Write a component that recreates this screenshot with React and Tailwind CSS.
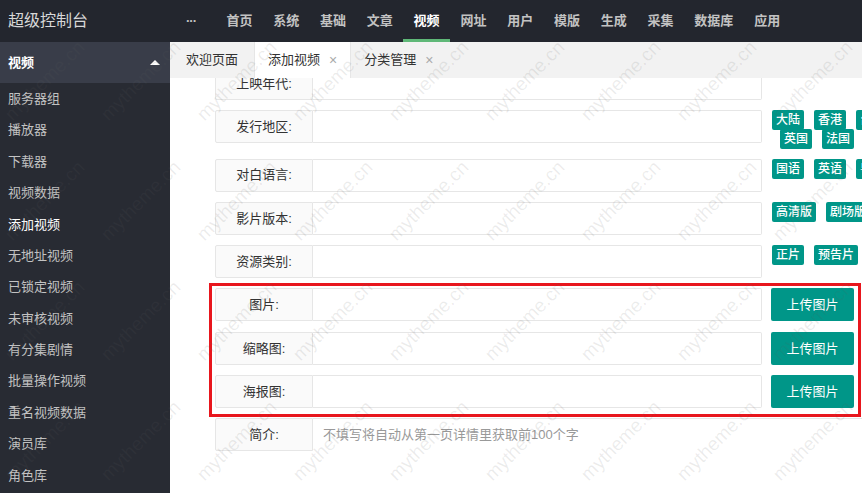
import React from 'react';

const navItems = ['首页', '系统', '基础', '文章', '视频', '网址', '用户', '模版', '生成', '采集', '数据库', '应用'];

const sideItems = [
  '服务器组',
  '播放器',
  '下载器',
  '视频数据',
  '添加视频',
  '无地址视频',
  '已锁定视频',
  '未审核视频',
  '有分集剧情',
  '批量操作视频',
  '重名视频数据',
  '演员库',
  '角色库',
];

const Tag = ({ children }) => (
  <span className="h-[20px] leading-[20px] px-1 bg-[#009688] text-white text-[12px] font-medium rounded-[2px] shrink-0">
    {children}
  </span>
);

const Row = ({ label, children }) => (
  <div className="flex items-start shrink-0">
    <div className="w-[98px] h-[33px] shrink-0 flex items-center justify-center bg-[#fafafa] border border-[#e6e6e6] rounded-l-[2px] text-[13px] text-[#333]">
      {label}
    </div>
    <div className="w-[449px] h-[33px] shrink-0 bg-white border border-l-0 border-[#e6e6e6] rounded-r-[2px]" />
    {children}
  </div>
);

const Tags = ({ items }) => (
  <div className="ml-[10px] flex gap-[10px] whitespace-nowrap shrink-0">
    {items.map((t) => (
      <Tag key={t}>{t}</Tag>
    ))}
  </div>
);

const UploadButton = () => (
  <button className="ml-[9px] w-[83px] h-[33px] shrink-0 bg-[#009688] text-white text-[13px] rounded-[2px]">
    上传图片
  </button>
);

const Watermark = () => {
  const marks = [];
  for (let r = -4; r <= 1; r++) {
    for (let c = -7; c <= 3; c++) {
      marks.push({ x: 621 + c * 96, y: 441 + r * 120 });
    }
  }
  return (
    <div className="absolute inset-0 pointer-events-none overflow-hidden">
      {marks.map((m, i) => (
        <span
          key={i}
          className="absolute -translate-x-1/2 -translate-y-1/2 -rotate-45 text-[19px] text-[rgba(95,95,95,0.12)] whitespace-nowrap"
          style={{ left: m.x, top: m.y }}
        >
          mytheme.cn
        </span>
      ))}
    </div>
  );
};

export default function App() {
  return (
    <div className="relative w-[862px] h-[493px] overflow-hidden bg-white font-['Liberation_Sans','Noto_Sans_CJK_SC',sans-serif]">
      {/* top bar */}
      <div className="h-[42px] bg-[#23262e] flex items-center">
        <div className="w-[176px] pl-2 text-[16px] text-[#d8d8d8] shrink-0">超级控制台</div>
        <div className="flex h-full items-center">
          <div className="w-[40px] pl-[10px] text-[13px] font-bold text-[#c2c2c2] tracking-[-1px]">···</div>
          {navItems.map((n) => (
            <div
              key={n}
              className={
                n === '视频'
                  ? 'relative h-full flex items-center px-[10.4px] text-[13px] font-bold text-white'
                  : 'relative h-full flex items-center px-[10.4px] text-[13px] font-bold text-[#c2c2c2]'
              }
            >
              {n}
              {n === '视频' && <span className="absolute left-0 right-0 bottom-0 h-[3px] bg-[#5fb878]" />}
            </div>
          ))}
        </div>
      </div>

      <div className="flex h-[451px]">
        {/* sidebar */}
        <div className="w-[170px] shrink-0 bg-[#282b33]">
          <div className="h-[41px] bg-[#393d49] flex items-center justify-between pl-2 pr-[10px]">
            <span className="text-[13px] font-bold text-white">视频</span>
            <span className="w-0 h-0 border-x-[5px] border-x-transparent border-b-[5px] border-b-white" />
          </div>
          {sideItems.map((s) => (
            <div
              key={s}
              className={
                s === '添加视频'
                  ? 'h-[31.4px] flex items-center pl-2 text-[13px] text-white'
                  : 'h-[31.4px] flex items-center pl-2 text-[13px] text-[#c2c2c2]'
              }
            >
              {s}
            </div>
          ))}
        </div>

        {/* main */}
        <div className="flex-1 flex flex-col min-w-0">
          <div className="h-[36px] bg-[#f2f2f2] flex text-[13px] text-[#333] shrink-0">
            <div className="px-4 flex items-center">欢迎页面</div>
            <div className="px-[13px] flex items-center gap-[9px] bg-white border-x border-[#e6e6e6]">
              添加视频
              <span className="text-[#aaa] text-[14px]">×</span>
            </div>
            <div className="px-[13px] flex items-center gap-[9px]">
              分类管理
              <span className="text-[#aaa] text-[14px]">×</span>
            </div>
          </div>

          <div className="flex-1 overflow-hidden">
            <div className="pl-[45px] -mt-[11px] flex flex-col gap-[10.3px]">
              <Row label="上映年代:" />
              <div className="flex items-start h-[38px] shrink-0">
                <Row label="发行地区:" />
                <div className="ml-[10px] flex flex-col shrink-0">
                  <div className="flex gap-[10px] whitespace-nowrap">
                    <Tag>大陆</Tag>
                    <Tag>香港</Tag>
                    <Tag>台湾</Tag>
                  </div>
                  <div className="-mt-px ml-[8px] flex gap-[10px] whitespace-nowrap">
                    <Tag>英国</Tag>
                    <Tag>法国</Tag>
                  </div>
                </div>
              </div>
              <Row label="对白语言:">
                <Tags items={['国语', '英语', '粤语']} />
              </Row>
              <Row label="影片版本:">
                <Tags items={['高清版', '剧场版']} />
              </Row>
              <Row label="资源类别:">
                <Tags items={['正片', '预告片']} />
              </Row>
              <Row label="图片:">
                <UploadButton />
              </Row>
              <Row label="缩略图:">
                <UploadButton />
              </Row>
              <Row label="海报图:">
                <UploadButton />
              </Row>
              <div className="flex items-start shrink-0">
                <div className="w-[98px] h-[33px] shrink-0 flex items-center justify-center bg-[#fafafa] border border-[#e6e6e6] rounded-l-[2px] text-[13px] text-[#333]">
                  简介:
                </div>
                <div className="w-[620px] h-[160px] shrink-0 bg-white border border-l-0 border-[#e6e6e6] px-[10px] pt-[6px] text-[13px] text-[#999]">
                  不填写将自动从第一页详情里获取前100个字
                </div>
              </div>
            </div>
          </div>
        </div>
      </div>

      {/* annotation */}
      <div className="absolute left-[209px] top-[283px] w-[652px] h-[134px] border-[3px] border-[#e8161d] pointer-events-none" />

      <Watermark />
    </div>
  );
}
